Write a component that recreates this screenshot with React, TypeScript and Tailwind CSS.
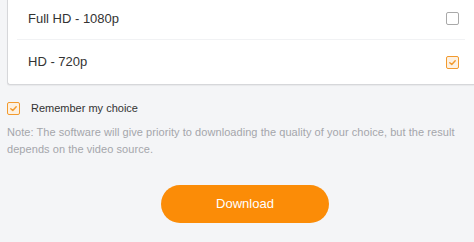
import * as React from "react";

/** Quality picker — resolution list, remember toggle, note and download button. */

interface Option {
  label: string;
  checked: boolean;
}

const options: Option[] = [
  { label: "Full HD - 1080p", checked: false },
  { label: "HD - 720p", checked: true },
];

function Box({ checked }: { checked: boolean }) {
  if (!checked) {
    return <span className="block h-[13px] w-[13px] rounded-[2px] border-[1.5px] border-[#a9a9a9] bg-white" />;
  }
  return (
    <span className="flex h-[13px] w-[13px] items-center justify-center rounded-[2px] border-[1.5px] border-[#f29a2e] bg-[#fdf1e2]">
      <svg viewBox="0 0 10 10" className="h-[9px] w-[9px]" fill="none">
        <path d="M2 5.2 L4.2 7.2 L8 3" stroke="#f29a2e" strokeWidth="1.6" strokeLinecap="round" strokeLinejoin="round" />
      </svg>
    </span>
  );
}

export default function App() {
  return (
    <div className="h-[242px] w-[474px] overflow-hidden bg-[#f4f5f7] font-['Liberation_Sans',Arial,sans-serif]">
      <div className="ml-[7px] mt-[-2px] rounded-bl-[3px] border-b border-l border-[#d6d7da] bg-white shadow-[0_1px_1px_rgba(0,0,0,0.05)]">
        {options.map((o, i) => (
          <React.Fragment key={o.label}>
            {i > 0 ? <div className="mx-[9px] h-px bg-[#f1f2f4]" /> : null}
            <div className={`flex items-center pl-[20px] pr-[15px] ${i === 0 ? "h-[41px]" : "h-[44px]"}`}>
              <span className="text-[13px] text-[#333333]">{o.label}</span>
              <span className="ml-auto">
                <Box checked={o.checked} />
              </span>
            </div>
          </React.Fragment>
        ))}
      </div>

      <div className="ml-[7px] mt-[16px] flex h-[14px] items-center gap-[11px]">
        <Box checked />
        <span className="text-[11px] text-[#333333]">Remember my choice</span>
      </div>

      <p className="ml-[7px] mt-[9px] w-[460px] text-[11px] leading-[17px] tracking-[0.06px] text-[#a4a6ab]">
        Note: The software will give priority to downloading the quality of your choice, but the result depends on the
        video source.
      </p>

      <button
        type="button"
        className="ml-[161px] mt-[27px] flex h-[38px] w-[168px] items-center justify-center rounded-full bg-[#fb8c07] text-[13px] text-white"
      >
        Download
      </button>
    </div>
  );
}
